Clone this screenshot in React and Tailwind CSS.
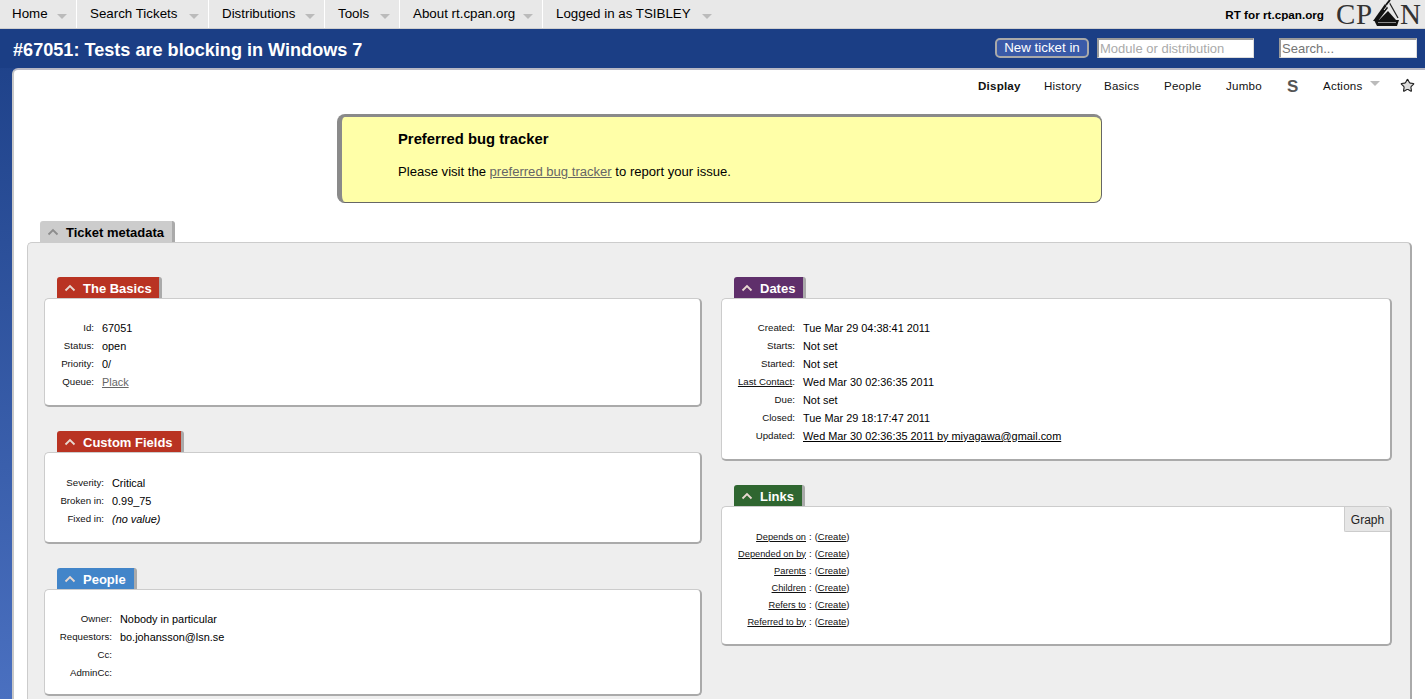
import React from "react";
import { Star } from "lucide-react";

const Arrow = ({ className = "" }) => (
  <svg width="10" height="5" viewBox="0 0 10 5" className={className}>
    <path d="M0 0H10L5 5Z" fill="#bbbbbb" />
  </svg>
);

const Chevron = ({ color = "#e8d8d0" }) => (
  <svg width="12" height="8" viewBox="0 0 12 8" className="shrink-0">
    <path d="M1.5 6.5L6 2L10.5 6.5" fill="none" stroke={color} strokeWidth="1.8" />
  </svg>
);

const nav = [
  ["Home", "pl-3 w-[77px]"],
  ["Search Tickets", "pl-[13px] w-[132px]"],
  ["Distributions", "pl-[13px] w-[116px]"],
  ["Tools", "pl-[13px] w-[75px]"],
  ["About rt.cpan.org", "pl-[13px] w-[143px]"],
];

const subnav = [
  ["Display", "font-bold w-[66px]"],
  ["History", "w-[60px]"],
  ["Basics", "w-[60px]"],
  ["People", "w-[62px]"],
  ["Jumbo", "w-[61px]"],
];

function Card({ title, tabClass, height, pad = "pt-[20px]", labelWidth, rows, gap = true, children }) {
  return (
    <section className={gap ? "mb-[24px]" : ""}>
      <div className={`ml-[13px] h-[21px] w-fit flex items-center gap-[7px] pl-[7px] pt-[1px] rounded-t-[3px] border-r-[3px] border-[#aaaaaa] text-white text-[13px] font-bold leading-none ${tabClass}`}>
        <Chevron />
        <span>{title}</span>
      </div>
      <div className={`relative bg-white rounded-[5px] border-t border-l border-[#cccccc] border-r-2 border-b-2 border-r-[#aaaaaa] border-b-[#aaaaaa] ${pad} ${height}`}>
        {rows && (
          <div className="flex flex-col">
            {rows.map(([k, v], i) => (
              <div key={i} className="flex h-[18px] items-center">
                <div className={`text-right text-[9.7px] text-[#111111] ${labelWidth}`}>{k}</div>
                <div className="ml-2 text-[10.9px] text-black">{v}</div>
              </div>
            ))}
          </div>
        )}
        {children}
      </div>
    </section>
  );
}

const linkRows = ["Depends on", "Depended on by", "Parents", "Children", "Refers to", "Referred to by"];

export default function App() {
  return (
    <div className="h-[699px] w-[1425px] overflow-hidden bg-gradient-to-b from-[#1b3e85] to-[#4a70c0] font-['Liberation_Sans',Arial,sans-serif] text-black">
      <header className="h-[29px] bg-[#e8e8e8] border-b border-[#cfcfcf] flex items-stretch">
        {nav.map(([t, c]) => (
          <div key={t} className={`flex items-center justify-between pr-[9px] border-r border-white text-[13.33px] shrink-0 ${c}`}>
            <span>{t}</span>
            <Arrow className="mt-[4px]" />
          </div>
        ))}
        <div className="flex items-center pl-[13px] text-[13.33px] gap-[11px]">
          <span>Logged in as TSIBLEY</span>
          <Arrow className="mt-[4px]" />
        </div>
        <div className="ml-auto flex items-center">
          <span className="text-[11.7px] font-bold mr-[11px] mt-[1px]">RT for rt.cpan.org</span>
          <div className="flex items-center h-[28px] w-[90px] font-['Liberation_Serif',serif] text-[29px] leading-[26px] font-normal text-[#333333]">
            <span className="w-[20px] shrink-0 ml-[1px]">C</span>
            <span className="w-[16px] shrink-0">P</span>
            <svg width="30" height="28" viewBox="0 0 30 28" className="shrink-0 -ml-[1px]">
              <path d="M14 4L2 21H7L17 8Z" fill="#111111" />
              <path d="M18 2L27 18" stroke="#222222" strokeWidth="1.3" fill="none" />
              <path d="M7 21L17 11L25 20Z" fill="#111111" />
              <path d="M3 20H28L26 26H6Z" fill="#111111" />
              <path d="M7 22.5H25" stroke="#8a8a8a" strokeWidth="1" />
              <path d="M19 0L15 5" stroke="#111111" strokeWidth="2" />
              <path d="M20 1L13 10" stroke="#e8e8e8" strokeWidth="1" />
            </svg>
            <span className="w-[22px] shrink-0 -ml-[1px]">N</span>
          </div>
        </div>
      </header>

      <div className="h-[39px] bg-[#1b3e85] flex items-center pl-[13px]">
        <h1 className="text-[18.1px] font-bold text-white leading-none mt-[3px]">#67051: Tests are blocking in Windows 7</h1>
        <div className="ml-auto flex items-center h-[20px] -mt-[2px] pr-[8px]">
          <button className="h-[20px] w-[94px] rounded-[5px] border-2 border-[#a9a9a9] bg-[#3a5aa8] text-white text-[13.33px] leading-none">New ticket in</button>
          <input
            placeholder="Module or distribution"
            className="ml-[8px] w-[157px] h-[20px] bg-white px-[1px] text-[13px] border-t-2 border-l-2 border-t-[#9a9a9a] border-l-[#9a9a9a] border-r border-b border-r-[#dddddd] border-b-[#dddddd] placeholder:text-[#aaaaaa] outline-none"
          />
          <input
            placeholder="Search..."
            className="ml-[25px] w-[138px] h-[20px] bg-white px-[1px] text-[13px] border-t-2 border-l-2 border-t-[#9a9a9a] border-l-[#9a9a9a] border-r border-b border-r-[#dddddd] border-b-[#dddddd] placeholder:text-[#757575] outline-none"
          />
        </div>
      </div>

      <main className="ml-[12px] h-[631px] bg-white rounded-tl-[6px] border-t-2 border-l-2 border-t-[#b8b8c4] border-l-[#c8c8c8] overflow-hidden">
        <nav className="h-[44px] flex items-start pt-[8px] pl-[964px] text-[11.6px] tracking-[0.2px] leading-[15px] text-[#111111]">
          {subnav.map(([t, c]) => (
            <span key={t} className={`shrink-0 ${c}`}>{t}</span>
          ))}
          <span className="w-[36px] shrink-0 mt-[1px] text-[17px] font-bold text-[#555555] leading-[16px]">S</span>
          <span className="shrink-0 w-[47px]">Actions</span>
          <Arrow className="mt-[3px] shrink-0" />
          <Star size={15} strokeWidth={1.8} color="#222222" fill="#dddddd" className="ml-[20px] shrink-0" />
        </nav>

        <div className="mx-auto w-[765px] h-[89px] rounded-[8px] border border-[#666666] border-t-[3px] border-t-[#8a8a8a] border-l-[5px] border-l-[#8a8a8a] bg-[#ffffa8] pl-[56px] pt-[12px]">
          <h2 className="text-[14.8px] font-bold leading-[20px]">Preferred bug tracker</h2>
          <p className="text-[13.08px] mt-[13px] leading-[20px]">
            Please visit the <a className="text-[#666666] underline">preferred bug tracker</a> to report your issue.
          </p>
        </div>

        <section className="mt-[18px] ml-[13px]">
          <div className="ml-[13px] h-[21px] w-fit flex items-center gap-[7px] pl-[7px] pr-[8px] pt-[1px] rounded-t-[3px] bg-[#cccccc] border-r-[3px] border-[#aaaaaa] text-[13px] font-bold leading-none">
            <Chevron color="#8c8c8c" />
            <span>Ticket metadata</span>
          </div>
          <div className="w-[1385px] h-[480px] bg-[#eeeeee] rounded-[5px] border-t border-l border-[#cccccc] border-r-2 border-r-[#aaaaaa] pt-[34px] pl-[16px] flex gap-[19px]">
            <div className="w-[658px] shrink-0">
              <Card
                title="The Basics"
                tabClass="bg-[#b93322] pr-[7px]"
                height="h-[109px]"
                labelWidth="w-[49px]"
                rows={[
                  ["Id:", "67051"],
                  ["Status:", "open"],
                  ["Priority:", "0/"],
                  ["Queue:", <a className="text-[#666666] underline">Plack</a>],
                ]}
              />
              <Card
                title="Custom Fields"
                tabClass="bg-[#b93322] pr-[8px]"
                height="h-[92px]"
                pad="pt-[21px]"
                labelWidth="w-[59px]"
                rows={[
                  ["Severity:", "Critical"],
                  ["Broken in:", "0.99_75"],
                  ["Fixed in:", <i>(no value)</i>],
                ]}
              />
              <Card
                title="People"
                tabClass="bg-[#4285c9] pr-[8px]"
                height="h-[107px]"
                labelWidth="w-[67px]"
                rows={[
                  ["Owner:", "Nobody in particular"],
                  ["Requestors:", "bo.johansson@lsn.se"],
                  ["Cc:", ""],
                  ["AdminCc:", ""],
                ]}
              />
            </div>
            <div className="w-[671px] shrink-0">
              <Card
                title="Dates"
                tabClass="bg-[#5f2f6b] pr-[8px]"
                height="h-[163px]"
                labelWidth="w-[73px]"
                rows={[
                  ["Created:", "Tue Mar 29 04:38:41 2011"],
                  ["Starts:", "Not set"],
                  ["Started:", "Not set"],
                  [<span><a className="underline">Last Contact</a>:</span>, "Wed Mar 30 02:36:35 2011"],
                  ["Due:", "Not set"],
                  ["Closed:", "Tue Mar 29 18:17:47 2011"],
                  ["Updated:", <a className="underline">Wed Mar 30 02:36:35 2011 by miyagawa@gmail.com</a>],
                ]}
              />
              <Card title="Links" tabClass="bg-[#2f6630] pr-[8px]" height="h-[140px]" pad="pt-[22px]" gap={false}>
                <div className="absolute right-0 top-0 h-[25px] w-[46px] flex items-center justify-center pt-[1px] bg-[#e6e6e6] border-l border-b border-[#cccccc] rounded-tr-[5px] rounded-bl-[2px] text-[12px] text-[#222222]">
                  Graph
                </div>
                <div className="flex flex-col">
                  {linkRows.map((k) => (
                    <div key={k} className="flex h-[17px] items-center text-[9.5px] text-[#111111]">
                      <a className="w-[84px] text-right text-[9.25px]"><span className="underline">{k}</span></a>
                      <span className="ml-[3px]">:</span>
                      <span className="ml-[3px]">(<a className="underline">Create</a>)</span>
                    </div>
                  ))}
                </div>
              </Card>
            </div>
          </div>
        </section>
      </main>
    </div>
  );
}
